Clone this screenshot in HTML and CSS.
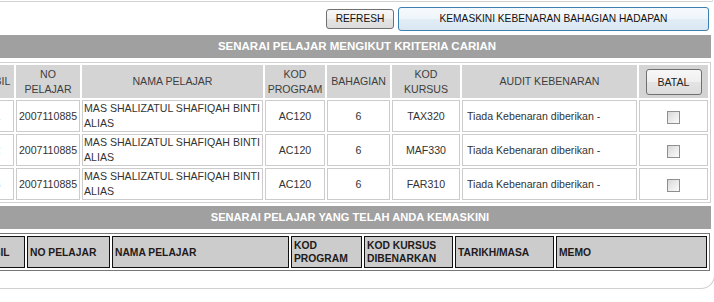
FILE: index.html
```html
<!DOCTYPE html>
<html>
<head>
<meta charset="utf-8">
<link rel="stylesheet" href="styles.css">
</head>
<body>
<div class="page">
  <div class="prev-box"></div>
  <div class="panel">
    <div class="toolbar">
      <button class="btn btn-refresh">REFRESH</button>
      <button class="btn btn-primary">KEMASKINI KEBENARAN BAHAGIAN HADAPAN</button>
    </div>
    <div class="title-bar title-bar--upper">SENARAI PELAJAR MENGIKUT KRITERIA CARIAN</div>
    <table class="results">
      <thead>
        <tr>
          <th class="c-bil">BIL</th>
          <th class="c-no">NO<br>PELAJAR</th>
          <th class="c-nama">NAMA PELAJAR</th>
          <th class="c-kodp">KOD<br>PROGRAM</th>
          <th class="c-bah">BAHAGIAN</th>
          <th class="c-kodk">KOD<br>KURSUS</th>
          <th class="c-audit">AUDIT KEBENARAN</th>
          <th class="c-batal"><button class="btn btn-cancel">BATAL</button></th>
        </tr>
      </thead>
      <tbody>
        <tr>
          <td class="num">1</td>
          <td>2007110885</td>
          <td class="left">MAS SHALIZATUL SHAFIQAH BINTI ALIAS</td>
          <td>AC120</td>
          <td>6</td>
          <td>TAX320</td>
          <td class="audit">Tiada Kebenaran diberikan -</td>
          <td><span class="check"></span></td>
        </tr>
        <tr>
          <td class="num">2</td>
          <td>2007110885</td>
          <td class="left">MAS SHALIZATUL SHAFIQAH BINTI ALIAS</td>
          <td>AC120</td>
          <td>6</td>
          <td>MAF330</td>
          <td class="audit">Tiada Kebenaran diberikan -</td>
          <td><span class="check"></span></td>
        </tr>
        <tr>
          <td class="num">3</td>
          <td>2007110885</td>
          <td class="left">MAS SHALIZATUL SHAFIQAH BINTI ALIAS</td>
          <td>AC120</td>
          <td>6</td>
          <td>FAR310</td>
          <td class="audit">Tiada Kebenaran diberikan -</td>
          <td><span class="check"></span></td>
        </tr>
      </tbody>
    </table>
    <div class="title-bar title-bar--lower">SENARAI PELAJAR YANG TELAH ANDA KEMASKINI</div>
    <table class="updated">
      <thead>
        <tr>
          <th class="u-bil">BIL</th>
          <th class="u-no">NO PELAJAR</th>
          <th class="u-nama">NAMA PELAJAR</th>
          <th class="u-kodp">KOD<br>PROGRAM</th>
          <th class="u-kodk">KOD KURSUS<br>DIBENARKAN</th>
          <th class="u-tarikh">TARIKH/MASA</th>
          <th class="u-memo">MEMO</th>
        </tr>
      </thead>
    </table>
  </div>
</div>
</body>
</html>
```
FILE: styles.css
```css
html, body {
  margin: 0;
  padding: 0;
  background: #ffffff;
  overflow: hidden;
}

body {
  font-family: "Liberation Sans", Arial, sans-serif;
  color: #333333;
}

.page {
  width: 714px;
  height: 302px;
  overflow: hidden;
}

.prev-box {
  margin-left: -14px;
  width: 726px;
  height: 1px;
  box-sizing: content-box;
  border-bottom: 1px solid #d2d2d2;
  border-right: 1px solid #d2d2d2;
  border-bottom-right-radius: 2px;
}

.panel {
  margin-left: -14px;
  width: 729px;
  box-sizing: border-box;
  border: 1px solid #d0d0d0;
  border-top: none;
  border-bottom-right-radius: 14px;
  padding: 0 3px 17px 0;
}

.toolbar {
  height: 33px;
  display: flex;
  justify-content: flex-end;
  align-items: center;
  gap: 4px;
  padding-right: 2px;
}

.btn {
  font-family: "Liberation Sans", Arial, sans-serif;
  font-size: 10.2px;
  color: #111111;
  border: 1px solid #707070;
  border-radius: 3px;
  background: linear-gradient(#f7f7f7 0%, #efefef 50%, #e4e4e4 51%, #dcdcdc 100%);
  padding: 0;
  margin: 0;
  box-sizing: border-box;
  text-align: center;
}

.btn-refresh {
  width: 68px;
  height: 20px;
}

.btn-primary {
  width: 311px;
  height: 24px;
  border-color: #3c7fb1;
  background: linear-gradient(#f6fafd 0%, #eef5fa 50%, #e2edf5 51%, #d9e7f2 100%);
}

.btn-cancel {
  width: 56px;
  height: 26px;
  font-size: 10.6px;
  color: #222222;
}

.title-bar {
  height: 23px;
  line-height: 23px;
  background: #a0a0a0;
  color: #ffffff;
  font-weight: bold;
  font-size: 11.5px;
  text-align: center;
  white-space: nowrap;
}

.title-bar--upper {
  padding-left: 16px;
}

.title-bar--lower {
  margin-top: 3px;
  padding-left: 2px;
  font-size: 11.1px;
}

.results {
  margin-top: 4px;
  margin-left: 1px;
  width: 723px;
  table-layout: fixed;
  border-collapse: separate;
  border-spacing: 2px;
  border: 1px solid #d0d0d0;
  font-size: 10.6px;
  line-height: 15px;
}

.results th,
.results td {
  box-sizing: border-box;
  padding: 0 1px;
  text-align: center;
  vertical-align: middle;
  overflow: hidden;
}

.results th {
  height: 33px;
  background: #d4d4d4;
  border: 1px solid #d4d4d4;
  font-weight: normal;
  color: #3e3e3e;
}

.results td {
  height: 32px;
  border: 1px solid #cccccc;
  color: #333333;
}

.results td.left {
  text-align: left;
}

.results td.audit {
  text-align: left;
  padding-left: 4px;
}

.results td.num {
  padding-right: 11px;
}

.c-bil { width: 23px; }
.c-no { width: 64px; }
.c-nama { width: 181px; }
.c-kodp { width: 60px; }
.c-bah { width: 63px; }
.c-kodk { width: 68px; }
.c-audit { width: 175px; }
.c-batal { width: 69px; }

.check {
  display: inline-block;
  width: 13px;
  height: 13px;
  box-sizing: border-box;
  border: 1px solid #8e8f8f;
  background: linear-gradient(135deg, #d8d8d8 0%, #ececec 55%, #fbfbfb 100%);
  vertical-align: middle;
  margin-top: 2px;
}

.updated {
  margin-top: 4px;
  width: 723px;
  table-layout: fixed;
  border-collapse: separate;
  border-spacing: 2px;
  border: 1px solid #777777;
  font-size: 10.3px;
  line-height: 13px;
}

.updated th {
  box-sizing: border-box;
  height: 32px;
  padding: 0 2px;
  background: #cccccc;
  border: 1px solid #111111;
  font-weight: bold;
  color: #221a1a;
  text-align: left;
  vertical-align: middle;
  white-space: nowrap;
  overflow: hidden;
}

.u-bil { width: 35px; }
.u-no { width: 83px; }
.u-nama { width: 177px; }
.u-kodp { width: 71px; }
.u-kodk { width: 89px; }
.u-tarikh { width: 99px; }
.u-memo { width: 151px; }
```
